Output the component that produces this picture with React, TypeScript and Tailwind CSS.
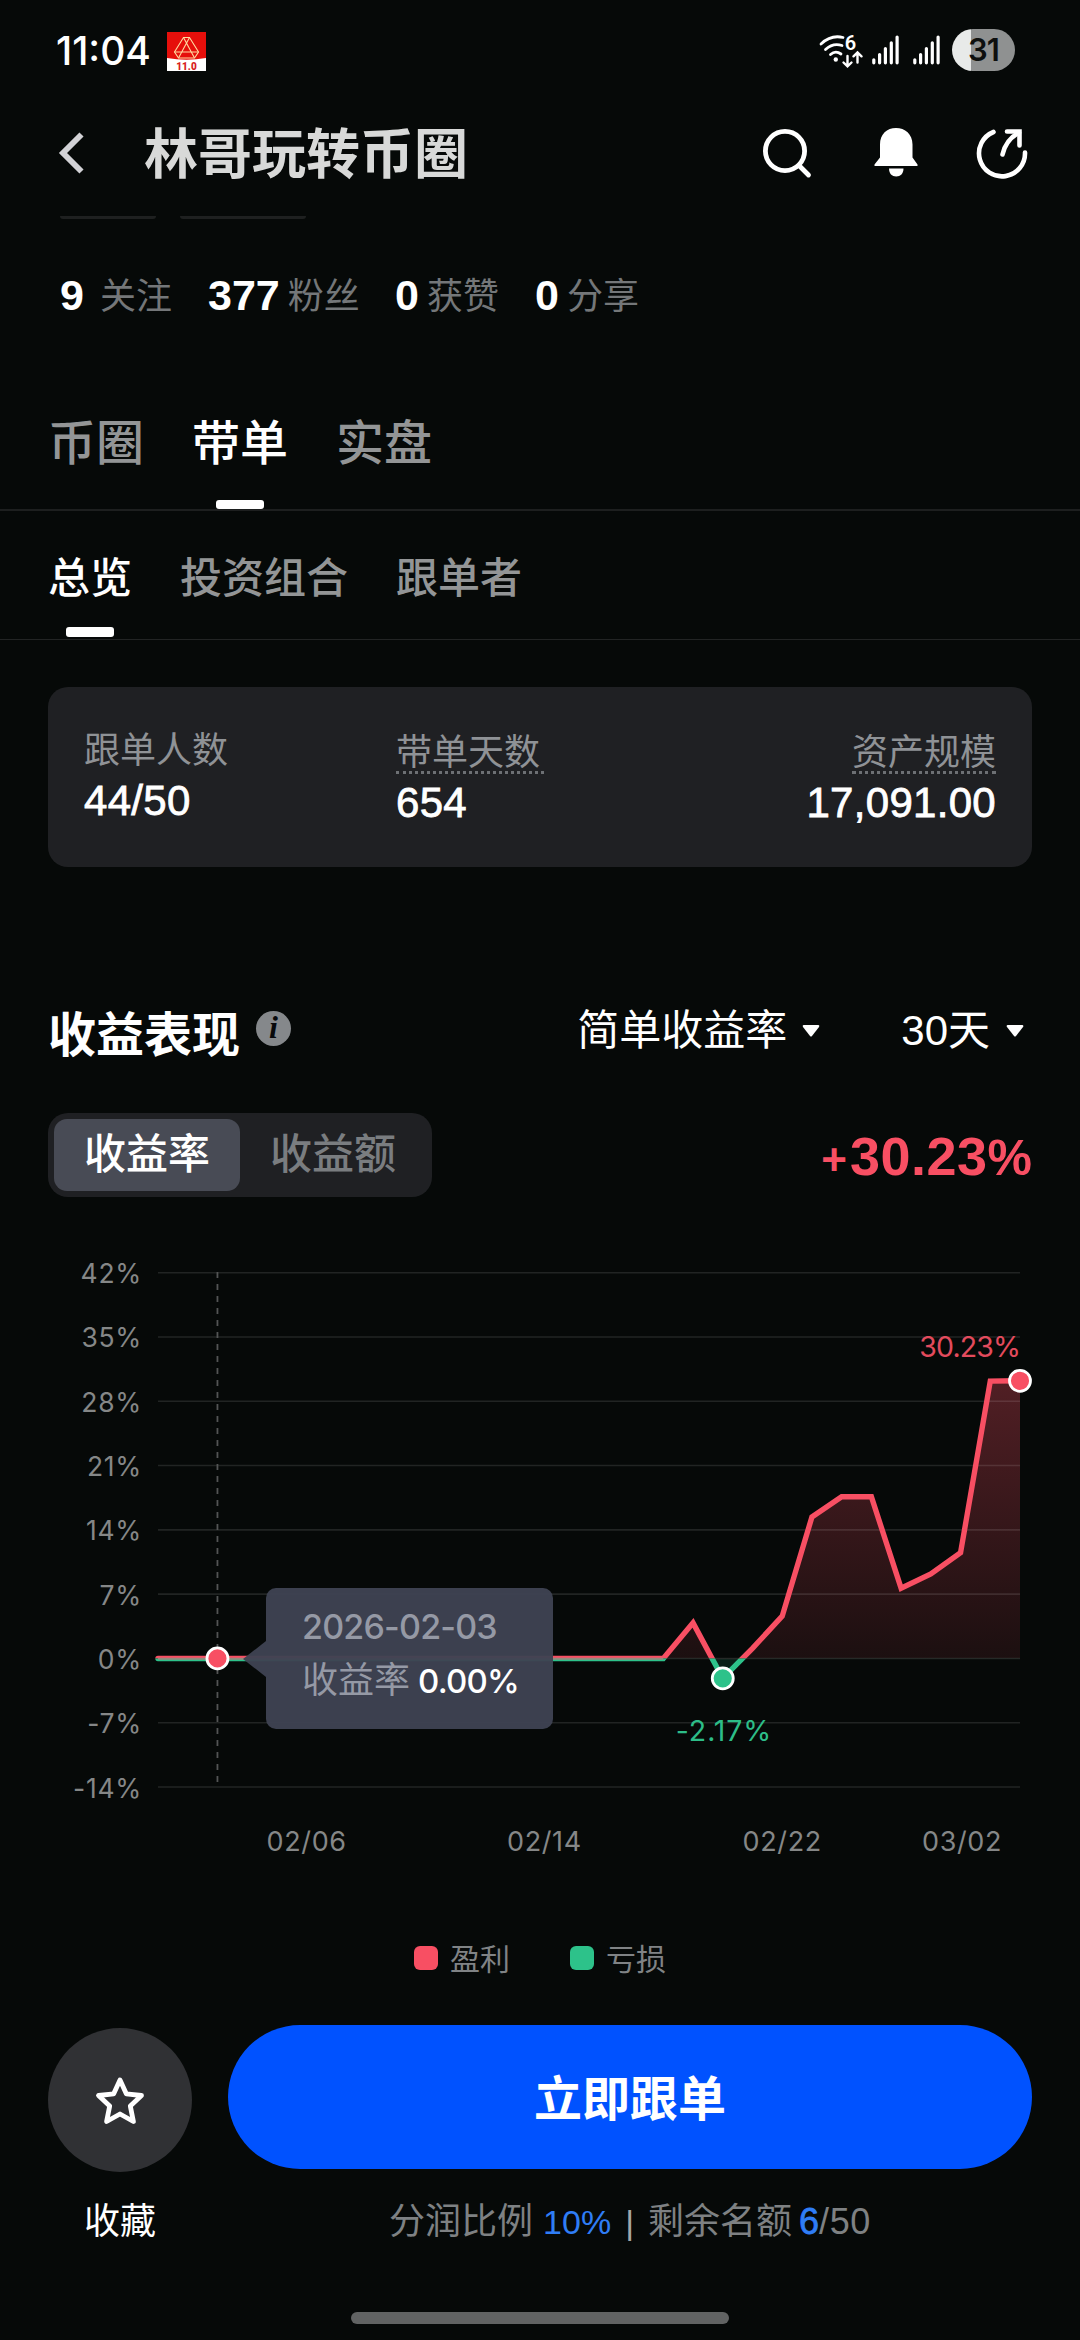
type Tab = { label: string; active?: boolean };

const stats = [
  { value: "9", label: "关注", className: "w-[148px] gap-[16px]" },
  { value: "377", label: "粉丝", className: "w-[187px] gap-[8px]" },
  { value: "0", label: "获赞", className: "w-[140px] gap-[8px]" },
  { value: "0", label: "分享", className: "w-[140px] gap-[8px]" },
];

const mainTabs: Tab[] = [
  { label: "币圈" },
  { label: "带单", active: true },
  { label: "实盘" },
];

const subTabs: Tab[] = [
  { label: "总览", active: true },
  { label: "投资组合" },
  { label: "跟单者" },
];

// daily return in percent, one entry per day starting at 02/01
const returns = [
  0, 0, 0, 0, 0, 0, 0, 0, 0, 0, 0, 0, 0, 0, 0, 0, 0, 0, 3.87, -2.17, 1.1, 4.6,
  15.4, 17.6, 17.6, 7.65, 9.2, 11.5, 30.2, 30.23,
];
const yTicks = [42, 35, 28, 21, 14, 7, 0, -7, -14];
const xTicks = [
  { label: "02/06", day: 5 },
  { label: "02/14", day: 13 },
  { label: "02/22", day: 21 },
  { label: "03/02", day: 27.05 },
];

const LEFT = 158;
const RIGHT = 1020;
const xAt = (day: number) => LEFT + (day * (RIGHT - LEFT)) / 29;
const yAt = (value: number) => 32.7 + (42 - value) * 9.184;
const ZERO = yAt(0);

const StatusBar = () => (
  <div className="h-[100px] flex items-center pl-[56px] pr-[65px]">
    <span className="font-['Inter'] font-medium text-[39px] leading-none">
      11:04
    </span>
    <svg width="39" height="39" viewBox="0 0 39 39" className="ml-[16px] mt-[3px]">
      <rect width="39" height="39" fill="#fff" />
      <path d="M0 0H39V26Q19.5 29.5 0 26Z" fill="#e60f0b" />
      <g fill="none" stroke="#ffd9a0" strokeWidth="1.1">
        <path d="M16.5 5.5H22.5L31.5 20L27.5 26H11.5L7.5 20Z" />
        <path d="M16.5 5.5L27.5 26M22.5 5.5L11.5 26M7.5 20H31.5" />
      </g>
      <text
        x="19.5"
        y="37.5"
        textAnchor="middle"
        fontFamily="Roboto"
        fontWeight="900"
        fontSize="10"
        fill="#d8201c"
      >
        11.0
      </text>
    </svg>
    <div className="ml-auto flex items-center">
      <svg width="44" height="44" viewBox="0 -5 44 44" className="mt-[2px]">
        <g fill="none" stroke="#fff" strokeWidth="2.8" strokeLinecap="round">
          <path d="M2 10Q12 0.5 24 3.5" />
          <path d="M6.5 15.5Q14 8.5 23 11.5" />
          <path d="M11.5 20.5Q16.5 16 22 20" />
          <path d="M28.5 22V32M24.5 28.5L28.5 32.3L32.5 28.5" strokeWidth="2.4" />
          <path d="M38.5 28.5V19M34.5 22.3L38.5 18.5L42.5 22.3" strokeWidth="2.4" />
        </g>
        <circle cx="16.8" cy="25.5" r="2.2" fill="#fff" />
        <text x="31.5" y="15.8" textAnchor="middle" fontFamily="Roboto" fontWeight="600" fontSize="20" fill="#fff">
          6
        </text>
      </svg>
      <Signal className="ml-[9px]" />
      <Signal className="ml-[14px]" />
      <div className="ml-[12px] w-[63px] h-[42px] rounded-full overflow-hidden bg-[linear-gradient(90deg,#e8eae9_19px,#8f9191_19px)] text-[#0d0f0e] font-['Inter'] font-semibold text-[31px] leading-[42px] tracking-[-1px] text-center">
        31
      </div>
    </div>
  </div>
);

const Signal = ({ className }: { className: string }) => (
  <svg width="27" height="30" viewBox="0 0 27 30" className={className}>
    <g stroke="#fff" strokeWidth="3.2" strokeLinecap="round">
      <path d="M1.8 24.8V27.8M7.6 19.5V27.8M13.4 13.5V27.8M19.3 7.8V27.8M25.1 2V27.8" />
    </g>
  </svg>
);

const Header = () => (
  <div className="h-[106px] flex items-center pl-[58px] pr-[50px]">
    <svg width="26" height="42" viewBox="0 0 26 42">
      <path d="M23.5 2.5L5 21L23.5 39.5" fill="none" stroke="#d2d2d6" strokeWidth="5.8" />
    </svg>
    <h1 className="ml-[60px] mt-[4px] text-[54px] leading-none font-bold text-[#d8d9d8]">
      林哥玩转币圈
    </h1>
    <div className="ml-auto flex items-center">
      <svg width="52" height="52" viewBox="0 0 52 52" fill="none" stroke="#fff">
        <circle cx="24" cy="24" r="19.6" strokeWidth="4.8" />
        <path d="M38 38.5L47.5 48" strokeWidth="4.8" strokeLinecap="round" />
      </svg>
      <svg width="46" height="52" viewBox="0 0 46 52" className="ml-[60px] mb-[2px]" fill="#fff">
        <path d="M7 18.5C7 8 14 2 23 2S39.5 8 39.5 18.5V31.5L44.500 38.500V40H1.500V38.500L7 31.500Z" />
        <path d="M16 42.500H30.500C30.500 47.500 27.500 50.500 23.200 50.500S16 47.500 16 42.500Z" />
      </svg>
      <svg width="54" height="54" viewBox="0 0 54 54" className="ml-[57px]" fill="none" stroke="#fff" strokeWidth="4.6">
        <path d="M17.500 5.500A23 23 0 1 0 49 26" strokeLinecap="round" transform="translate(0 .5)" />
        <path d="M26.500 28.500C28.500 19.500 34 11.500 43 6.500" strokeLinecap="round" />
        <path d="M31 5.500H43.500V19.500" strokeLinecap="round" />
      </svg>
    </div>
  </div>
);

const Tabs = ({ tabs, small }: { tabs: Tab[]; small?: boolean }) => (
  <div
    className={`flex gap-12 px-12 ${
      small
        ? "h-[129px] pt-[44px] border-b border-[#222424] mb-[1px]"
        : "h-[140px] pt-[46px] border-b-2 border-[#1d1f1f]"
    }`}
  >
    {tabs.map((tab) => (
      <div key={tab.label} className="flex flex-col items-center">
        <span
          className={`font-medium ${
            small ? "text-[42px] leading-[48px]" : "text-[48px] leading-[54px]"
          } ${tab.active ? "text-white" : "text-[#939596]"}`}
        >
          {tab.label}
        </span>
        {tab.active && (
          <div
            className={`w-12 rounded-[3px] bg-white ${
              small ? "mt-[24px] h-[10px]" : "mt-[29px] h-[9px]"
            }`}
          />
        )}
      </div>
    ))}
  </div>
);

const Caret = () => (
  <svg width="18" height="12" viewBox="0 0 18 12">
    <path d="M1.500 0H16.500Q18 .5 17 2L10 11Q9 12 8 11L1 2Q0 .5 1.500 0Z" fill="#fff" />
  </svg>
);

const SummaryCard = () => (
  <div className="mx-12 mt-[47px] h-[180px] rounded-[20px] bg-[#1f2023] px-9 pt-10 flex text-[36px]">
    <div className="w-[312px]">
      <div className="h-[45px] leading-[47px] text-[#8f9296]">跟单人数</div>
      <Amount>44/50</Amount>
    </div>
    <div className="pt-[2px]">
      <div className="w-[148px] h-[45px] leading-[47px] text-[#8f9296] border-b-[3px] border-dotted border-[#6d7074]">
        带单天数
      </div>
      <Amount>654</Amount>
    </div>
    <div className="pt-[2px] ml-auto flex flex-col items-end">
      <div className="h-[45px] leading-[47px] text-[#8f9296] border-b-[3px] border-dotted border-[#6d7074]">
        资产规模
      </div>
      <Amount>17,091.00</Amount>
    </div>
  </div>
);

const Amount = ({ children }: { children: string }) => (
  <div className="text-[42px] leading-[57px] tracking-[0.3px] text-white [-webkit-text-stroke:0.8px_#fff]">
    {children}
  </div>
);

const Chart = () => {
  const points = returns.map((value, day) => `${xAt(day)},${yAt(value)}`);
  const line = `M${points.join("L")}`;
  const area = `${line}L${RIGHT},${ZERO}L${LEFT},${ZERO}Z`;

  return (
    <div className="relative mt-[43px] h-[640px]">
      <svg width="1080" height="640" viewBox="0 0 1080 640" className="font-['Inter']">
        <defs>
          <clipPath id="profit">
            <rect x="0" y="0" width="1080" height={ZERO} />
          </clipPath>
          <clipPath id="loss">
            <rect x="0" y={ZERO} width="1080" height="200" />
          </clipPath>
          <linearGradient id="fill" gradientUnits="userSpaceOnUse" x1="0" y1={yAt(30.23)} x2="0" y2={ZERO}>
            <stop offset="0" stopColor="#f84f63" stopOpacity="0.31" />
            <stop offset="1" stopColor="#f84f63" stopOpacity="0.09" />
          </linearGradient>
        </defs>

        <path d={area} fill="url(#fill)" clipPath="url(#profit)" />
        <path d={area} fill="#2dc28a" fillOpacity="0.12" clipPath="url(#loss)" />

        {yTicks.map((tick) => (
          <g key={tick}>
            <line x1={LEFT} x2={RIGHT} y1={yAt(tick)} y2={yAt(tick)} stroke="#fff" strokeOpacity="0.11" strokeWidth="1.6" />
            <text x="142" y={yAt(tick) + 10.5} textAnchor="end" fontSize="26.500" letterSpacing="0.7" fill="#858787">
              {tick}%
            </text>
          </g>
        ))}
        {xTicks.map((tick) => (
          <text key={tick.label} x={xAt(tick.day)} y="610.500" textAnchor="middle" fontSize="27" letterSpacing="0.6" fill="#858787">
            {tick.label}
          </text>
        ))}

        <line x1={xAt(2)} x2={xAt(2)} y1="32" y2="543" stroke="#535555" strokeWidth="1.8" strokeDasharray="6 6" />

        <g fill="none" strokeWidth="5.4" strokeLinecap="round">
          <path d={line} stroke="#f84f63" clipPath="url(#profit)" />
          <path d={line} stroke="#2dc28a" clipPath="url(#loss)" />
        </g>
        <line x1={LEFT} x2={xAt(17)} y1={ZERO + 0.3} y2={ZERO + 0.3} stroke="#98887f" strokeWidth="2" />

        <g stroke="#fff" strokeWidth="2.8">
          <circle cx={xAt(2)} cy={ZERO} r="10.5" fill="#f84f63" />
          <circle cx={xAt(19)} cy={yAt(-2.17)} r="10.5" fill="#2dc28a" />
          <circle cx={xAt(29)} cy={yAt(30.23)} r="10.5" fill="#f84f63" />
        </g>
        <text x="1020" y="117" textAnchor="end" fontSize="28.5" letterSpacing="-0.9" fill="#e34b5d">
          30.23%
        </text>
        <text x="724" y="500.5" textAnchor="middle" fontSize="28.5" letterSpacing="0.9" fill="#2dbd88">
          -2.17%
        </text>
      </svg>

      <div className="absolute left-[243px] top-[348px] flex items-center">
        <svg width="23" height="36" viewBox="0 0 23 36">
          <path d="M23 0V36L0 18Z" fill="#3e4352" fillOpacity="0.96" />
        </svg>
        <div className="w-[287px] h-[141px] rounded-[10px] bg-[#3e4352]/96 pl-9 pt-[12px] text-[#9599a5]">
          <div className="font-['Inter'] font-medium text-[34px] leading-[54px] tracking-[-0.8px]">
            2026-02-03
          </div>
          <div className="flex items-center leading-[54px] text-[36px]">
            收益率
            <span className="ml-[8px] text-white font-['Inter'] font-medium text-[33px] tracking-[-0.8px]">
              0.00%
            </span>
          </div>
        </div>
      </div>
    </div>
  );
};

const App = () => {
  return (
    <div className="w-[1080px] h-[2340px] overflow-hidden bg-[#060908] text-white font-['Liberation_Sans','Noto_Sans_CJK_SC',sans-serif]">
      <StatusBar />
      <Header />

      <div className="mt-[10px] h-[3px] flex gap-6 pl-[60px]">
        <div className="w-[96px] rounded-b-[3px] bg-[#1e2020]" />
        <div className="w-[126px] rounded-b-[3px] bg-[#1e2020]" />
      </div>

      <div className="h-[152px] flex items-center pl-[60px]">
        {stats.map((stat, index) => (
          <div key={index} className={`flex items-center ${stat.className}`}>
            <span className="text-[43px] leading-none font-bold">{stat.value}</span>
            <span className="mt-[3px] text-[36px] leading-none text-[#747779]">{stat.label}</span>
          </div>
        ))}
      </div>

      <Tabs tabs={mainTabs} />
      <Tabs tabs={subTabs} small />
      <SummaryCard />

      <div className="mt-[116px] h-[100px] px-12 flex items-center">
        <h2 className="mt-[5px] text-[48px] leading-none font-bold">收益表现</h2>
        <div className="ml-[16px] mb-[10px] size-[35px] rounded-full bg-[#85888b] text-[#08090b] font-['Liberation_Serif'] italic font-bold text-[32px] leading-[33px] text-center">
          i
        </div>
        <div className="ml-auto mb-[5px] flex items-center text-[42px] leading-none">
          简单收益率
          <div className="ml-[15px] flex">
            <Caret />
          </div>
          <span className="ml-[81px] mr-[16px]">30天</span>
          <Caret />
        </div>
        <div className="w-[8px]" />
      </div>

      <div className="mt-[30px] h-[84px] px-12 flex items-center justify-between">
        <div className="w-[384px] h-[84px] p-[6px] rounded-[20px] bg-[#1f2023] flex text-[42px] leading-[72px] font-medium">
          <div className="w-[186px] rounded-[13px] bg-[#484b55] text-center">收益率</div>
          <div className="w-[186px] text-center text-[#7a7d80]">收益额</div>
        </div>
        <div className="mt-[6px] flex items-baseline font-bold text-[54px] text-[#f84f63] leading-[84px]">
          <span className="mr-[3px] text-[44px]">+</span>
          <span className="tracking-[0.5px]">30.23</span>
          <span className="text-[50px]">%</span>
        </div>
      </div>

      <Chart />

      <div className="mt-[58px] h-10 flex items-center justify-center text-[30px] text-[#808385]">
        <div className="size-6 rounded-[6px] bg-[#f84f63]" />
        <span className="ml-3 mt-[3px]">盈利</span>
        <div className="ml-[60px] size-6 rounded-[6px] bg-[#2dc28a]" />
        <span className="ml-3 mt-[3px]">亏损</span>
      </div>

      <div className="mt-[47px] px-12 flex gap-9">
        <div className="w-[144px] flex flex-col items-center">
          <div className="mt-[3px] size-[144px] rounded-full bg-[#303134] grid place-content-center">
            <svg width="54" height="54" viewBox="0 0 54 54" className="mt-[4px]">
              <path
                d="M27 5L33.3 18.8L48.5 20.5L37.3 31L40.4 46.5L27 39L13.6 46.5L16.7 31L5.5 20.5L20.7 18.8Z"
                fill="none"
                stroke="#fff"
                strokeWidth="4.8"
                strokeLinejoin="round"
              />
            </svg>
          </div>
          <span className="mt-[28px] text-[36px] leading-[44px]">收藏</span>
        </div>
        <div className="flex-1 flex flex-col items-center">
          <button className="w-full h-[144px] rounded-full bg-[#0052ff] text-[48px] leading-[150px] font-bold">
            立即跟单
          </button>
          <div className="mt-[31px] flex items-center text-[36px] leading-[44px] text-[#7e8183]">
            分润比例
            <span className="ml-[10px] text-[34px] text-[#2f7df6]">10%</span>
            <span className="mx-[14px] text-[34px] text-[#a5a7a8]">|</span>
            剩余名额
            <span className="ml-[7px] text-[36px] text-[#2f7df6] [-webkit-text-stroke:0.8px_#2f7df6]">6</span>
            <span className="text-[36px] tracking-[0.6px]">/50</span>
          </div>
        </div>
      </div>

      <div className="mx-auto mt-[68px] w-[378px] h-3 rounded-full bg-[#616363]" />
    </div>
  );
};

export default App;
